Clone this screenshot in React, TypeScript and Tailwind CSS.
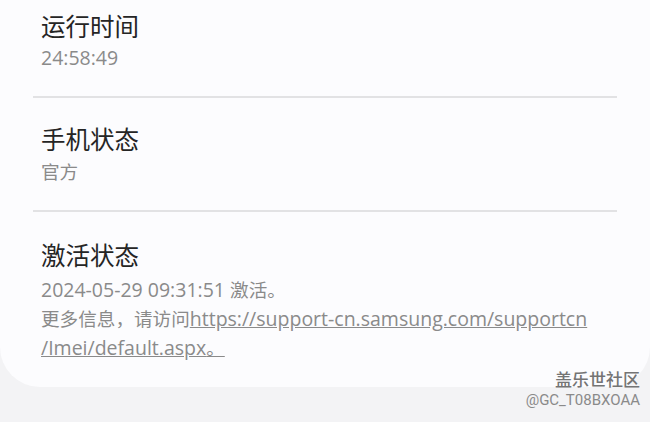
import React from "react";

const latin = { fontFamily: '"Open Sans", "Noto Sans CJK SC", sans-serif' };
const cjk = { fontFamily: '"Noto Sans CJK SC", sans-serif' };

function Divider() {
  return <div className="mx-[33px] h-[2px] bg-[#e2e2e4]" />;
}

function C({ children }: { children: React.ReactNode }) {
  return (
    <span className="text-[18.6px]" style={cjk}>
      {children}
    </span>
  );
}

export default function App() {
  return (
    <div
      className="relative w-[650px] h-[422px] overflow-hidden bg-[#f3f3f5]"
      style={latin}
    >
      <div className="w-[650px] bg-[#fcfcfe] rounded-b-[40px] pb-[25px]">
        <div className="px-[41px] pt-[10px] pb-[24px]">
          <div className="text-[24.5px] leading-[32px] text-[#252525]" style={cjk}>运行时间</div>
          <div className="mt-[2px] text-[19.5px] leading-[28px] text-[#8a8a8a]">24:58:49</div>
        </div>
        <Divider />
        <div className="px-[41px] pt-[25px] pb-[25px]">
          <div className="text-[24.5px] leading-[32px] text-[#252525]" style={cjk}>手机状态</div>
          <div className="mt-[2px] text-[18.6px] leading-[28px] text-[#8a8a8a]" style={cjk}>官方</div>
        </div>
        <Divider />
        <div className="px-[41px] pt-[27px]">
          <div className="text-[24.5px] leading-[32px] text-[#252525]" style={cjk}>激活状态</div>
          <div className="mt-[4px] text-[19.5px] leading-[28px] text-[#8a8a8a]">
            <div>
              2024-05-29 09:31:51 <C>激活。</C>
            </div>
            <div>
              <C>更多信息，请访问</C>
              <span className="underline">https://support-cn.samsung.com/supportcn</span>
            </div>
            <div>
              <span className="underline">
                /Imei/default.aspx<C>。 </C>
              </span>
            </div>
          </div>
        </div>
      </div>
      <div className="absolute right-[10px] top-[368px] flex flex-col items-end">
        <div className="text-[17px] leading-[22px] text-[#747474] font-medium" style={cjk}>盖乐世社区</div>
        <div className="text-[15px] leading-[20px] text-[#8a8a8a]" style={{ fontFamily: 'Roboto, sans-serif' }}>@GC_T08BXOAA</div>
      </div>
    </div>
  );
}
